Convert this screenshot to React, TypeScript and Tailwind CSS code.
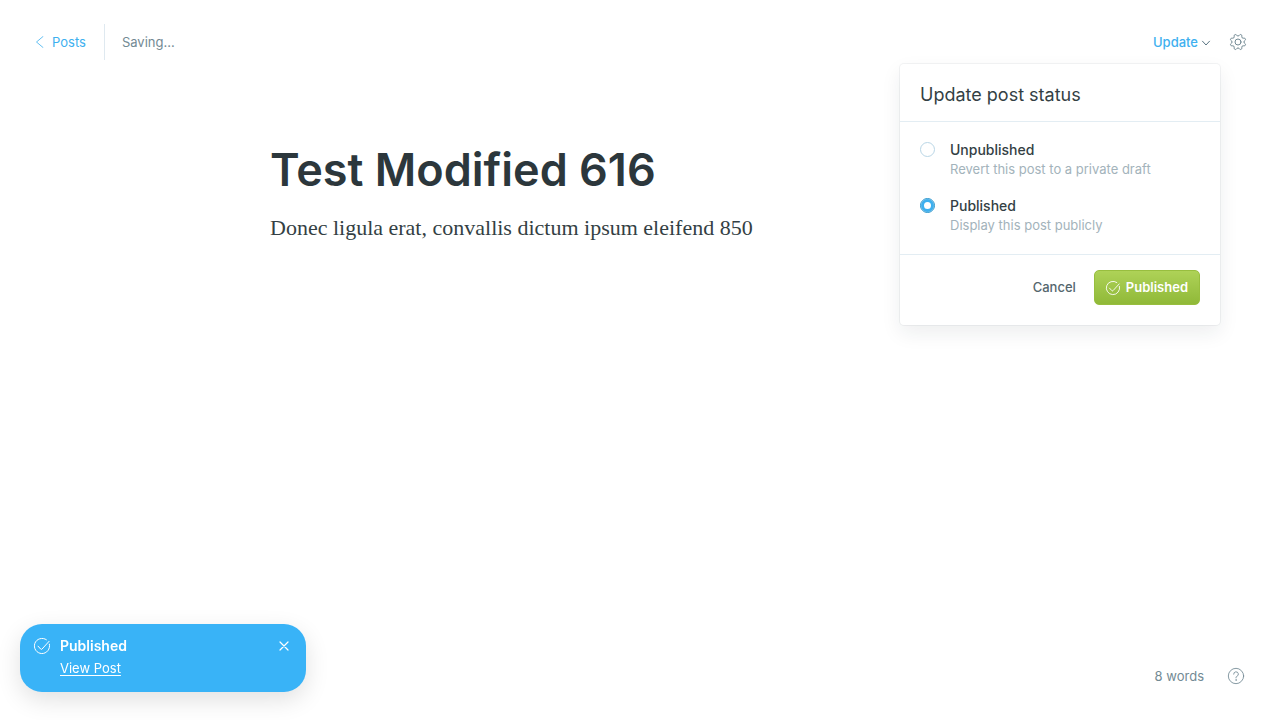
import { useState, type ReactNode } from "react";

function CheckCircle({ className }: { className: string }) {
  return (
    <svg viewBox="0 0 24 24" className={className} fill="none" stroke="currentColor" strokeWidth="1.5" strokeLinecap="round" strokeLinejoin="round" overflow="visible" aria-hidden="true">
      <path d="M6 12.2l4 4.3a1.4 1.4 0 0 0 2.1 0L22.6 5" />
      <path d="M23.1 9.2A11.4 11.4 0 1 1 18.6 2.6" />
    </svg>
  );
}

function GearIcon() {
  return (
    <svg viewBox="0 0 24 24" className="size-4" fill="none" stroke="currentColor" strokeWidth="1.5" strokeLinecap="round" strokeLinejoin="round" overflow="visible" aria-hidden="true">
      <circle cx="12" cy="12" r="4.5" />
      <path d="M10.546 2.438a1.957 1.957 0 0 0 2.908 0L14.4 1.4a1.959 1.959 0 0 1 3.41 1.413l-.071 1.4a1.958 1.958 0 0 0 2.051 2.054l1.4-.071a1.959 1.959 0 0 1 1.41 3.41l-1.042.94a1.96 1.96 0 0 0 0 2.909l1.042.94a1.959 1.959 0 0 1-1.413 3.41l-1.4-.071a1.958 1.958 0 0 0-2.056 2.056l.071 1.4A1.959 1.959 0 0 1 14.4 22.6l-.941-1.041a1.959 1.959 0 0 0-2.908 0L9.606 22.6A1.959 1.959 0 0 1 6.2 21.192l.072-1.4a1.958 1.958 0 0 0-2.056-2.056l-1.4.071A1.958 1.958 0 0 1 1.4 14.4l1.041-.94a1.96 1.96 0 0 0 0-2.909L1.4 9.606A1.958 1.958 0 0 1 2.809 6.2l1.4.071a1.958 1.958 0 0 0 2.058-2.06L6.2 2.81A1.959 1.959 0 0 1 9.606 1.4Z" />
    </svg>
  );
}

type Status = "unpublished" | "published";

function StatusOption(props: { value: Status; current: Status; onSelect: (s: Status) => void; title: string; children: ReactNode }) {
  const { value, current, onSelect, title, children } = props;
  return (
    <label className="flex cursor-pointer items-start gap-[15px]">
      <input
        type="radio"
        name="status"
        value={value}
        checked={current === value}
        onChange={() => onSelect(value)}
        className="mt-0.5 size-[15px] shrink-0 appearance-none rounded-full border border-[#b9d6e6] bg-white checked:border-[#2593cc] checked:shadow-[inset_0_0_0_3px_#3eb0ef]"
      />
      <span className="flex flex-col">
        <span className="text-sm leading-5 font-medium text-[#343f44]">{title}</span>
        <span className="text-[13px] leading-[19px] text-[#a3b3bb]">{children}</span>
      </span>
    </label>
  );
}

function StatusMenu() {
  const [status, setStatus] = useState<Status>("published");
  return (
    <section className="absolute top-full -right-2.5 mt-1 w-80 rounded bg-white shadow-[0_0_0_1px_rgba(99,114,130,0.08),0_8px_20px_rgba(27,39,51,0.08)]">
      <h2 className="border-b border-[#e3edf3] px-5 pt-[17px] pb-3 text-lg leading-7 text-[#343f44]">Update post status</h2>
      <div className="flex flex-col gap-[17px] border-b border-[#e3edf3] px-5 pt-[18px] pb-[19px]">
        <StatusOption value="unpublished" current={status} onSelect={setStatus} title="Unpublished">
          Revert this post to a private draft
        </StatusOption>
        <StatusOption value="published" current={status} onSelect={setStatus} title="Published">
          Display this post publicly
        </StatusOption>
      </div>
      <div className="flex items-center justify-end gap-[18px] px-5 pt-[15px] pb-5 text-[13px]">
        <button type="button" className="font-medium text-[#54666d]">Cancel</button>
        <button type="button" className="flex h-[35px] items-center gap-1.5 rounded-[5px] border border-[#98be3f] bg-linear-to-b from-[#aed257] to-[#90b938] px-[11px] font-semibold text-white">
          <CheckCircle className="size-3.5" />
          Published
        </button>
      </div>
    </section>
  );
}

export default function App() {
  return (
    <div className="flex min-h-screen flex-col bg-white font-['Inter',sans-serif] text-[13px] text-[#738a94]">
      <header className="flex items-center justify-between px-[34px] pt-6">
        <div className="flex items-center">
          <a href="#posts" className="flex h-9 items-center gap-1.5 border-r border-[#dfe9f0] pr-[18px] text-[#3eb0ef]">
            <svg viewBox="0 0 12 12" className="size-3" fill="none" stroke="currentColor" strokeWidth="0.8" strokeLinecap="round" strokeLinejoin="round" aria-hidden="true">
              <path d="M9 0.5 2.5 6 9 11.5" />
            </svg>
            <span className="pt-px">Posts</span>
          </a>
          <span className="pt-px pl-[17px]">Saving...</span>
        </div>
        <div className="flex items-center gap-5">
          <div className="relative">
            <button type="button" aria-expanded="true" className="flex h-9 items-center gap-1 font-medium text-[#3eb0ef]">
              <span className="pt-px">Update</span>
              <svg viewBox="0 0 8 8" className="size-2 text-[#5a7583]" fill="none" stroke="currentColor" strokeLinecap="round" strokeLinejoin="round" overflow="visible" aria-hidden="true">
                <path d="M0.5 3.2 4 7l3.5-3.8" />
              </svg>
            </button>
            <StatusMenu />
          </div>
          <button type="button" aria-label="Settings">
            <GearIcon />
          </button>
        </div>
      </header>

      <main className="mx-auto flex w-full max-w-[740px] grow flex-col pt-[83px]">
        <h1 className="text-[45px] leading-[54px] font-semibold text-[#2c373c]">Test Modified 616</h1>
        <p className="pt-[15px] font-['Georgia','Liberation_Serif',serif] text-[22px] leading-8 text-[#343f44]">
          Donec ligula erat, convallis dictum ipsum eleifend 850
        </p>
      </main>

      <footer className="flex items-center justify-end gap-6 px-9 pb-8">
        <span className="leading-6">8 words</span>
        <a href="#help" aria-label="Help">
          <svg viewBox="0 0 24 24" className="size-4" fill="none" stroke="currentColor" strokeWidth="1.3" strokeLinecap="round" strokeLinejoin="round" overflow="visible" aria-hidden="true">
            <circle cx="12" cy="12" r="11.5" />
            <path d="M8.5 9.2a3.5 3.5 0 1 1 4.8 3.3c-.9.4-1.3 1-1.3 1.9v.4" />
            <circle cx="12" cy="18" r="0.4" />
          </svg>
        </a>
      </footer>

      <aside className="fixed bottom-7 left-5 flex w-[286px] items-start gap-2.5 rounded-[22px] bg-[#39b3f7] px-3.5 pt-3 pb-3 text-white shadow-[0_8px_24px_rgba(0,0,0,0.12)]">
        <CheckCircle className="mt-0.5 size-4" />
        <div className="flex grow flex-col items-start">
          <strong className="text-sm leading-5 font-semibold">Published</strong>
          <a href="#post" className="leading-6 underline underline-offset-2">View Post</a>
        </div>
        <button type="button" aria-label="Close" className="mt-[5px] mr-[3px] p-px">
          <svg viewBox="0 0 8 8" className="size-2" fill="none" stroke="currentColor" strokeWidth="1.2" strokeLinecap="round" overflow="visible" aria-hidden="true">
            <path d="M0 0l8 8M8 0L0 8" />
          </svg>
        </button>
      </aside>
    </div>
  );
}
